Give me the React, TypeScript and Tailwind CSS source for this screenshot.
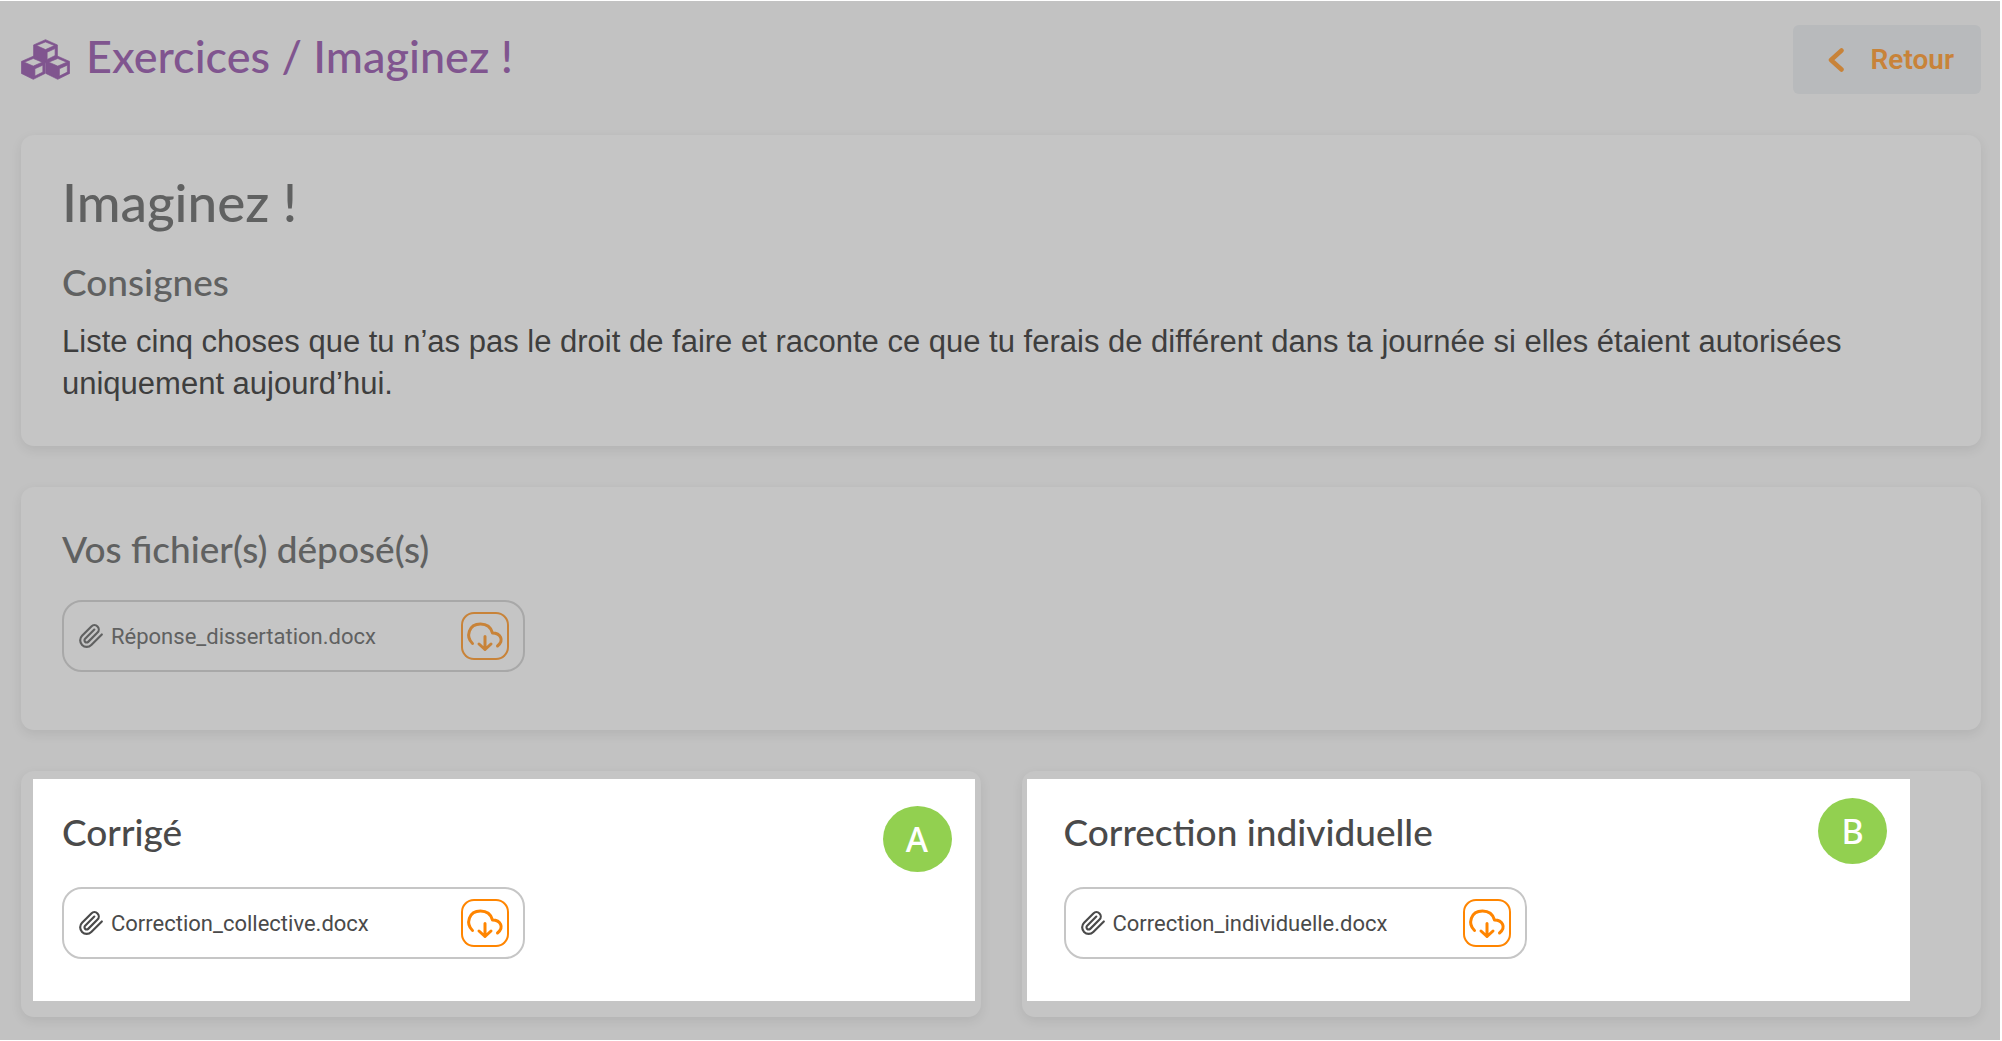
import type { ReactNode } from 'react';

const cube =
  'M37 1 L73 17 V53 L37 71 L1 53 V17 Z M37 8 L10 19 L37 31 L64 19 Z M42 39 V61 L66 49 V28 Z';

function CubesIcon() {
  return (
    <svg
      viewBox="0 0 148 122"
      className="mb-[3px] h-[41px] w-[49px] shrink-0"
      fill="currentColor"
      fillRule="evenodd"
      stroke="currentColor"
      strokeWidth="2"
      strokeLinejoin="round"
      aria-hidden="true"
    >
      <path d={cube} transform="translate(37 0)" />
      <path d={cube} transform="translate(0 50)" />
      <path d={cube} transform="translate(74 50)" />
    </svg>
  );
}

function ClipIcon() {
  return (
    <svg
      viewBox="0 0 24 24"
      className="h-[26px] w-[26px] shrink-0"
      fill="none"
      stroke="currentColor"
      strokeWidth="2"
      strokeLinecap="round"
      strokeLinejoin="round"
      aria-hidden="true"
    >
      <path d="m22 10.6-9.75 9.64a6 6 0 0 1-8.49-8.49l8.57-8.57A4 4 0 1 1 18 8.84l-8.59 8.57a2 2 0 0 1-2.83-2.83l8.49-8.48" />
    </svg>
  );
}

function CloudDownloadIcon() {
  return (
    <svg
      viewBox="0 0 48 48"
      className="h-full w-full"
      fill="none"
      stroke="currentColor"
      strokeWidth="3"
      strokeLinecap="round"
      strokeLinejoin="round"
      aria-hidden="true"
    >
      <path d="M11.5 31.5 C4.5 25 7.5 12 19.5 12 C25.5 12 30 15.5 31.5 21 C39.5 21 43.5 28.5 36.5 34" />
      <path d="M24 24.5 V37.5 M18 32 L24 37.5 L30 32" />
    </svg>
  );
}

function FileChip({ name, dimmed = false }: { name: string; dimmed?: boolean }) {
  return (
    <div
      className={`flex h-[72px] w-[463px] max-w-full items-center rounded-[20px] border-2 pr-[14px] pl-[14px] ${
        dimmed ? 'border-[#a8a8a8] text-[#606161]' : 'border-[#c6c6c6] text-[#4a4a4a]'
      }`}
    >
      <ClipIcon />
      <span className="ml-[7px] grow pt-[2px] font-[Roboto,sans-serif] text-[22px] leading-[28px]">{name}</span>
      <button
        type="button"
        aria-label={`Télécharger ${name}`}
        className={`h-[48px] w-[48px] shrink-0 rounded-[13px] shadow-[inset_0_0_0_2px_currentColor] ${
          dimmed ? 'text-[#c88339]' : 'text-[#ff8500]'
        }`}
      >
        <CloudDownloadIcon />
      </button>
    </div>
  );
}

function Card({ className, children }: { className: string; children: ReactNode }) {
  return (
    <section className={`rounded-[13px] bg-[#c5c5c5] shadow-[0_4px_12px_rgba(0,0,0,0.08)] ${className}`}>
      {children}
    </section>
  );
}

function Badge({ label, className }: { label: string; className: string }) {
  return (
    <span
      className={`absolute flex h-[66px] w-[69px] items-center justify-center rounded-[50%] bg-[#92d050] font-['Noto_Sans',sans-serif] text-[34px] leading-[40px] font-medium text-white ${className}`}
    >
      {label}
    </span>
  );
}

const subtitle = 'text-[37px] leading-[44px] font-medium';

export default function App() {
  return (
    <div className="bg-white py-px pr-[2px] font-[Lato,sans-serif]">
      <main className="bg-[#c2c2c2] pt-[24px] pr-[19px] pb-[23px] pl-[21px]">
        <header className="flex items-start justify-between">
          <h1 className="flex items-end gap-[16px] pt-[4px] text-[45px] leading-[54px] font-medium text-[#80558f]">
            <CubesIcon />
            Exercices / Imaginez !
          </h1>
          <button
            type="button"
            className="flex h-[69px] items-center gap-[27px] rounded-[6px] bg-[#b8babc] pr-[27px] pl-[35px] font-[Roboto,sans-serif] text-[28px] leading-[34px] font-semibold text-[#c88339]"
          >
            <svg
              viewBox="0 0 16 24"
              className="h-[24px] w-[16px]"
              fill="none"
              stroke="currentColor"
              strokeWidth="4.5"
              strokeLinecap="round"
              strokeLinejoin="round"
              aria-hidden="true"
            >
              <path d="M13.5 2.5 L3 12 L13.5 21.5" />
            </svg>
            Retour
          </button>
        </header>

        <Card className="mt-[41px] px-[41px] pt-[35px] pb-[41px] text-[#606161]">
          <h2 className="text-[53px] leading-[64px] font-medium">Imaginez !</h2>
          <h3 className="mt-[26px] text-[37px] leading-[44px] font-medium">Consignes</h3>
          <p className="mt-[17px] font-['Liberation_Sans',sans-serif] text-[31px] leading-[42px] text-[#3e3e3e]">
            Liste cinq choses que tu n’as pas le droit de faire et raconte ce que tu ferais de différent dans ta
            journée si elles étaient autorisées uniquement aujourd’hui.
          </p>
        </Card>

        <Card className="mt-[41px] px-[41px] pt-[40px] pb-[58px] text-[#606161]">
          <h3 className={`mb-[29px] ${subtitle}`}>Vos fichier(s) déposé(s)</h3>
          <FileChip name="Réponse_dissertation.docx" dimmed />
        </Card>

        <div className="mt-[41px] grid grid-cols-2 gap-[41px] text-[#4a4a4a]">
          <Card className="pt-[8px] pr-[6px] pb-[16px] pl-[12px]">
            <div className="relative bg-white pt-[31px] pb-[42px] pl-[29px]">
              <h3 className={`mb-[33px] ${subtitle}`}>Corrigé</h3>
              <FileChip name="Correction_collective.docx" />
              <Badge label="A" className="top-[27px] right-[23px]" />
            </div>
          </Card>
          <Card className="pt-[8px] pr-[71px] pb-[16px] pl-[5px]">
            <div className="relative bg-white pt-[31px] pb-[42px] pl-[37px]">
              <h3 className={`mb-[33px] ${subtitle}`}>Correction individuelle</h3>
              <FileChip name="Correction_individuelle.docx" />
              <Badge label="B" className="top-[19px] right-[23px]" />
            </div>
          </Card>
        </div>
      </main>
    </div>
  );
}
